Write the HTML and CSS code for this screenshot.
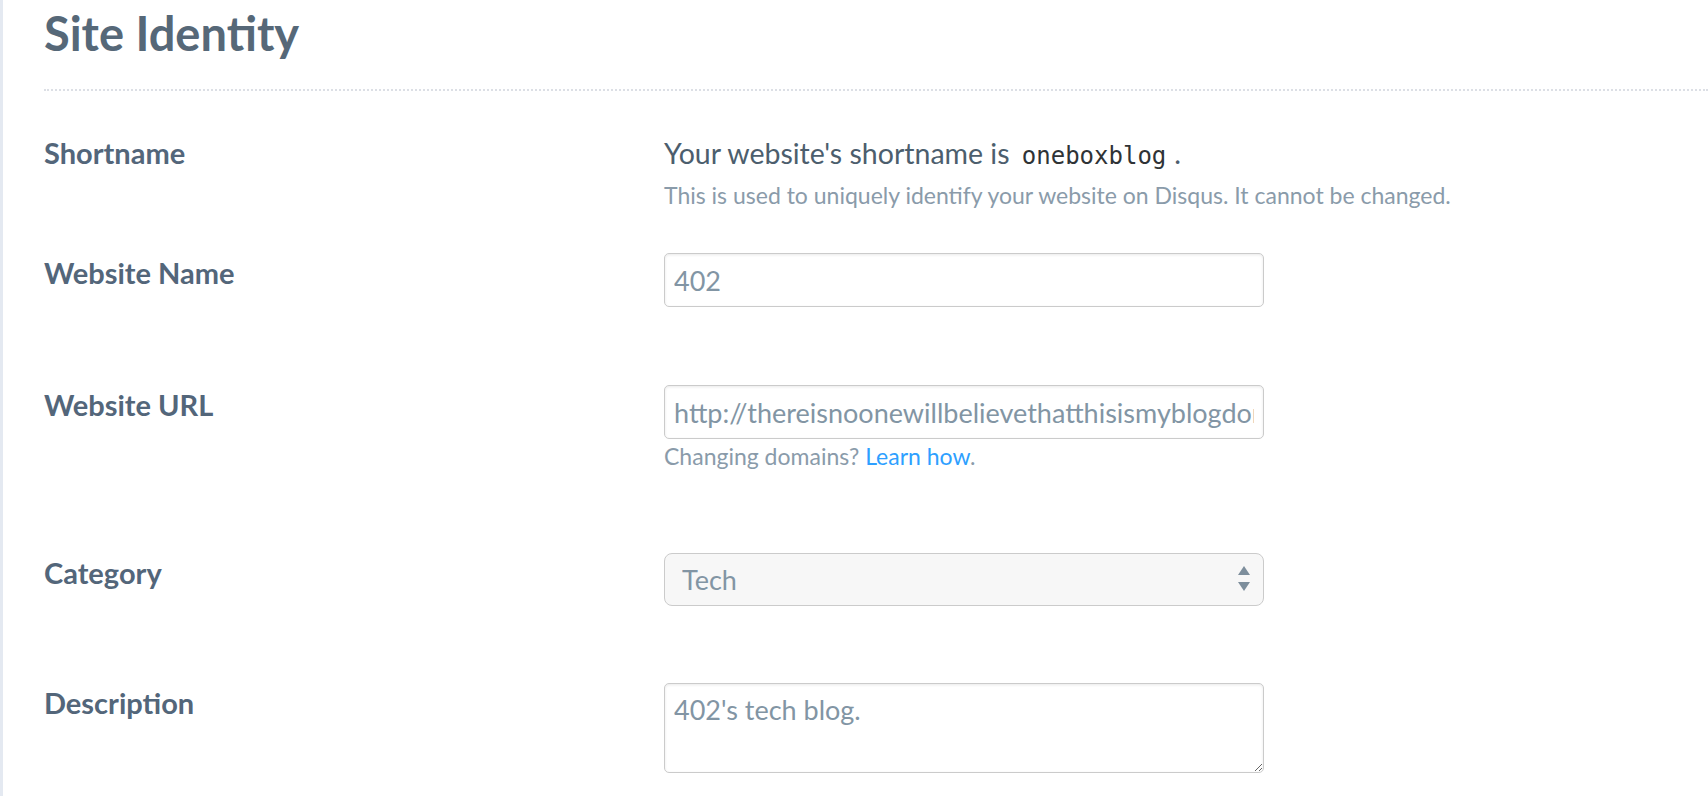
FILE: index.html
```html
<!DOCTYPE html>
<html lang="en">
<head>
<meta charset="utf-8">
<title>Site Identity</title>
<link rel="stylesheet" href="styles.css">
</head>
<body>
<div class="page">
  <h1 class="title">Site Identity</h1>
  <form class="form">
    <div class="row row-static">
      <div class="label label-static">Shortname</div>
      <div class="field">
        <p class="lead">Your website's shortname is <code class="code">oneboxblog</code>.</p>
        <p class="help help-tight">This is used to uniquely identify your website on Disqus. It cannot be changed.</p>
      </div>
    </div>
    <div class="row">
      <label class="label" for="name">Website Name</label>
      <div class="field">
        <input class="input" id="name" type="text" value="402">
      </div>
    </div>
    <div class="row row-help">
      <label class="label" for="url">Website URL</label>
      <div class="field">
        <input class="input" id="url" type="text" value="http://thereisnoonewillbelievethatthisismyblogdomain.com">
        <p class="help help-under">Changing domains? <a class="link" href="#">Learn how</a>.</p>
      </div>
    </div>
    <div class="row row-select">
      <label class="label" for="cat">Category</label>
      <div class="field">
        <div class="select-wrap">
          <select class="select" id="cat">
            <option>Tech</option>
          </select>
          <svg class="select-arrows" width="12" height="26" viewBox="0 0 12 26" aria-hidden="true">
            <polygon points="0,9 6,0 12,9" fill="#7d8e9c"/>
            <polygon points="0,16 12,16 6,25" fill="#7d8e9c"/>
          </svg>
        </div>
      </div>
    </div>
    <div class="row row-last">
      <label class="label" for="desc">Description</label>
      <div class="field">
        <textarea class="textarea" id="desc">402's tech blog.</textarea>
      </div>
    </div>
  </form>
</div>
</body>
</html>
```

FILE: styles.css
```css
html, body {
  margin: 0;
  padding: 0;
  background: #ffffff;
}

body {
  font-family: "Lato", "Open Sans", sans-serif;
  color: #4c5e6d;
  overflow: hidden;
}

.page {
  height: 796px;
  border-left: 3px solid #e4e9f1;
  padding: 5px 0 0 41px;
  box-sizing: border-box;
  overflow: hidden;
}

.title {
  margin: 0;
  font-size: 47px;
  line-height: 1.2;
  font-weight: 700;
  color: #566878;
  padding-bottom: 28px;
  border-bottom: 2px dotted #dcdfe5;
}

.form {
  padding-top: 45px;
}

.row {
  display: grid;
  grid-template-columns: 620px 1fr;
  align-items: start;
  margin-bottom: 78px;
}

.row-static {
  margin-bottom: 44px;
}

.row-help {
  margin-bottom: 83px;
}

.row-select {
  margin-bottom: 77px;
}

.row-last {
  margin-bottom: 0;
}

.label {
  display: block;
  font-size: 29px;
  line-height: 34px;
  font-weight: 700;
  color: #53667a;
  padding-top: 3px;
}

.label-static {
  padding-top: 0;
}

.field {
  display: flex;
  flex-direction: column;
  align-items: flex-start;
}

.lead {
  margin: 0;
  font-size: 28.5px;
  line-height: 34px;
  color: #4c5e6d;
  white-space: nowrap;
}

.code {
  font-family: "DejaVu Sans Mono", "Liberation Mono", monospace;
  font-size: 24px;
  color: #2f3336;
  padding: 0 8px 0 5px;
}

.help {
  margin: 0;
  font-size: 23px;
  line-height: 28px;
  color: #8a9baa;
  white-space: nowrap;
}

.help-tight {
  margin-top: 8px;
}

.help-under {
  margin-top: 3px;
}

.link {
  color: #2e9fff;
  text-decoration: none;
}

.input,
.textarea,
.select {
  font-family: "Lato", "Open Sans", sans-serif;
  font-size: 27px;
  line-height: 30px;
  color: #8295a4;
  width: 600px;
  box-sizing: border-box;
  border: 1px solid #cbcbcb;
  border-radius: 5px;
  margin: 0;
}

.input {
  height: 54px;
  padding: 11px 9px;
  background: #ffffff;
  box-shadow: inset 0 1px 3px rgba(0, 0, 0, 0.09);
  outline: none;
}

.select-wrap {
  position: relative;
  width: 600px;
}

.select {
  display: block;
  height: 53px;
  padding: 0 40px 0 17px;
  background: #f7f7f7;
  border-radius: 8px;
  -webkit-appearance: none;
  appearance: none;
}

.select-arrows {
  position: absolute;
  right: 14px;
  top: 13px;
}

.textarea {
  display: block;
  height: 90px;
  padding: 11px 9px;
  background: #ffffff;
  box-shadow: inset 0 1px 3px rgba(0, 0, 0, 0.09);
  resize: vertical;
  outline: none;
}
```
